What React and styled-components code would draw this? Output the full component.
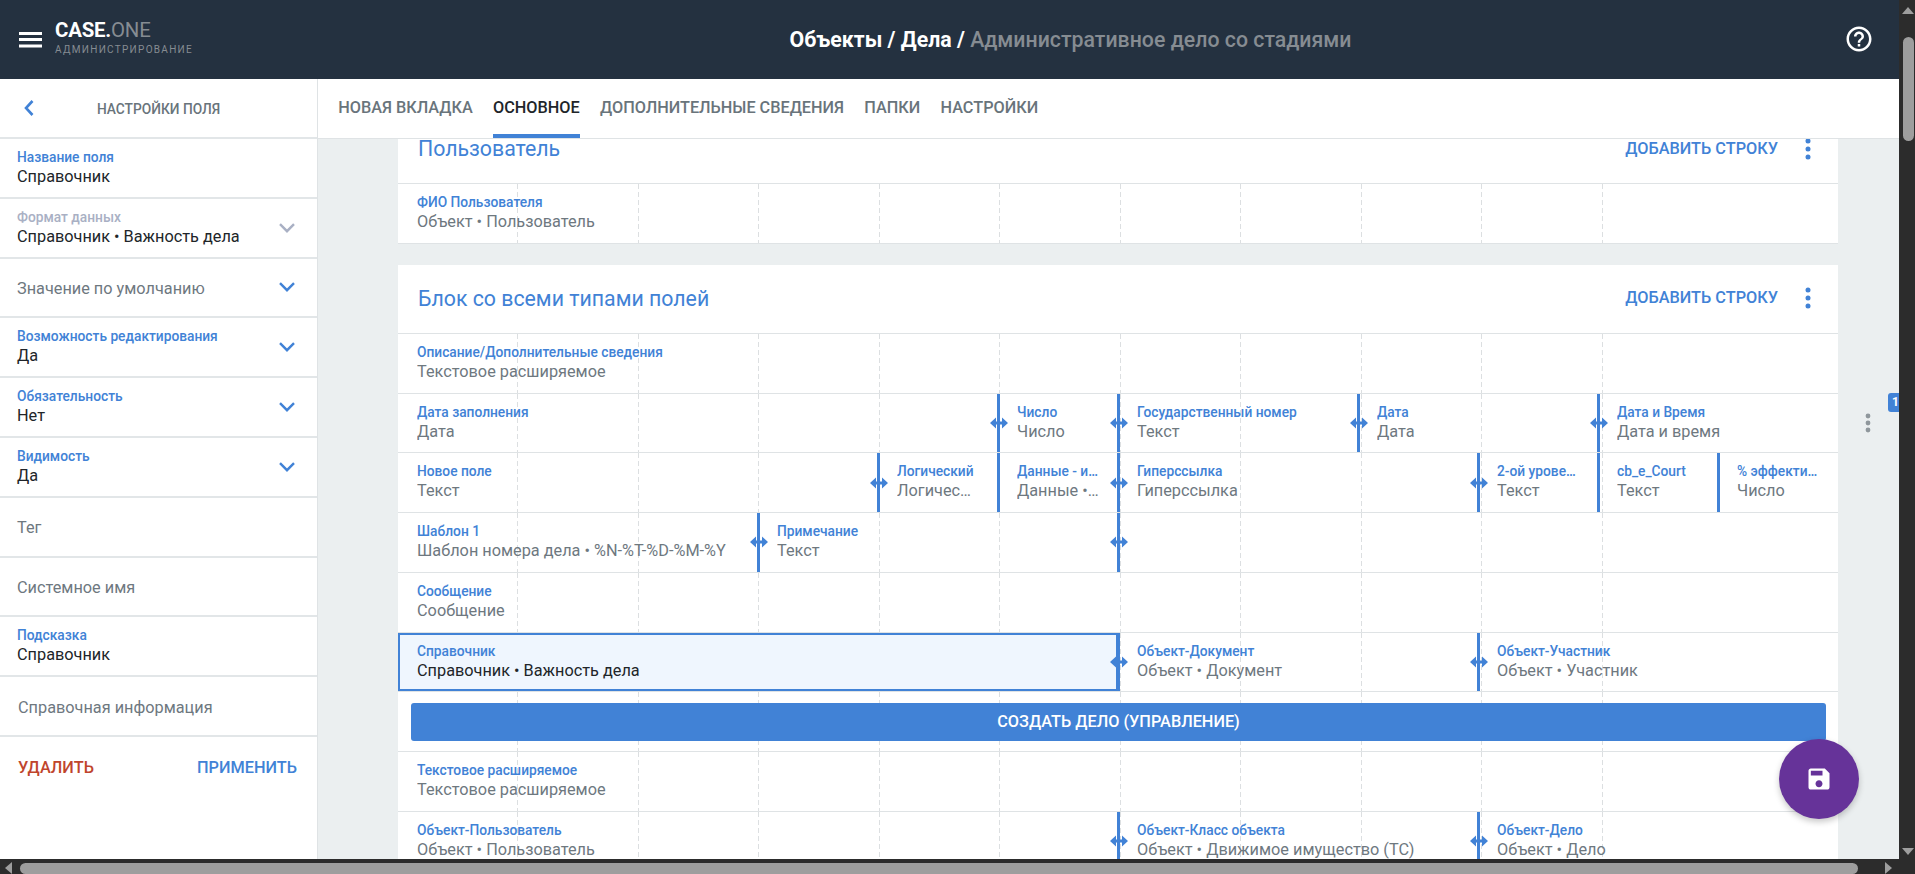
import React from "react";
import styled, { createGlobalStyle } from "styled-components";

const Global = createGlobalStyle`
  html, body { margin: 0; padding: 0; height: 100%; overflow: hidden; }
  body { font-family: Roboto, "Liberation Sans", sans-serif; }
  * { box-sizing: border-box; }
`;

const BLUE = "#4182d6";

const Page = styled.div`
  width: 1915px; height: 874px; overflow: hidden;
  display: grid; grid-template-columns: 1899px 16px; grid-template-rows: 859px 15px;
  background: #2c2c2c;
`;
const Viewport = styled.div`
  position: relative; overflow: hidden; display: flex; flex-direction: column; background: #ebeff0;
`;
const Header = styled.header`
  flex: 0 0 79px; background: #243140; display: flex; align-items: center;
`;
const Brand = styled.div`
  flex: 0 0 245px; display: flex; align-items: center; padding-left: 19px; gap: 13px;
`;
const BrandText = styled.div`
  display: flex; flex-direction: column; margin-top: -4px;
`;
const Logo = styled.div`
  font-size: 20.4px; line-height: 24px; font-weight: 700; color: #fff; letter-spacing: -0.2px;
  span { color: #868c92; font-weight: 400; }
`;
const LogoSub = styled.div`
  font-size: 10px; line-height: 14px; color: #868c92; letter-spacing: 1.3px; margin-top: 1px;
`;
const PageTitle = styled.h1`
  flex: 1; margin: 0; padding-left: 52px; text-align: center; font-size: 21.3px; font-weight: 700; color: #fff;
  span { color: #868c92; font-weight: 500; }
`;
const HelpBtn = styled.div`
  flex: 0 0 30px; height: 30px; margin-right: 25px; color: #fff; margin-top: -2px;
`;
const Body = styled.div`
  flex: 1; min-height: 0; display: flex;
`;
const Sidebar = styled.aside`
  flex: 0 0 318px; background: #fff; border-right: 1px solid #dfe3e5; display: flex; flex-direction: column;
`;
const SideHead = styled.div`
  flex: 0 0 60px; display: flex; align-items: center; position: relative; justify-content: center;
  border-bottom: 2px solid #e2e6e8; font-size: 13.75px; font-weight: 500; color: #69747b; padding-top: 1px;
  svg { position: absolute; left: 18px; top: 18px; }
`;
const SideRow = styled.div`
  flex: 0 0 59.8px; border-bottom: 2px solid #e2e6e8; display: flex; align-items: center; justify-content: space-between;
  padding: 0 22px 0 ${(p) => (p.$inset ? 18 : 17)}px;
`;
const SideText = styled.div`
  display: flex; flex-direction: column; margin-top: -1px;
`;
const SideLabel = styled.div`
  font-size: 13.75px; line-height: 19px; font-weight: 500; color: ${(p) => (p.$muted ? "#a9b0c4" : BLUE)};
`;
const SideValue = styled.div`
  font-size: 16.3px; line-height: 20px; color: #212529;
`;
const SidePlaceholder = styled.div`
  font-size: 16.3px; line-height: 20px; color: #6e787f; padding-top: 3px;
`;
const Actions = styled.div`
  display: flex; justify-content: space-between; padding: 21px 20px 0 18px;
`;
const ActionBtn = styled.button`
  border: 0; background: none; padding: 0; font: 500 16.3px/20px Roboto, sans-serif;
  color: ${(p) => (p.$danger ? "#c0452c" : BLUE)};
`;
const Main = styled.main`
  flex: 1; min-width: 0; display: flex; flex-direction: column;
`;
const Tabs = styled.nav`
  flex: 0 0 60px; background: #fff; border-bottom: 1px solid #dfe3e5; display: flex; padding-left: 10px; position: relative; z-index: 2;
`;
const Tab = styled.div`
  padding: 0 10.2px 2px; height: 59px; display: flex; align-items: center; font-size: 16.25px; font-weight: 500;
  color: ${(p) => (p.$active ? "#212529" : "#69747b")};
  position: relative;
  ${(p) => p.$active && `&::after { content: ""; position: absolute; left: 10.2px; right: 10.2px; bottom: 0; height: 4px; background: ${BLUE}; }`}
`;
const Canvas = styled.div`
  flex: 1; min-height: 0; overflow: hidden; padding: 0 61px 0 80px;
`;
const Stack = styled.div`
  margin-top: -24px; display: flex; flex-direction: column; gap: 21px;
`;
const Card = styled.section`
  width: 1440px; background: #fff; border-bottom: 1px solid #dfe3e5;
`;
const CardHead = styled.div`
  height: 68px; display: flex; align-items: center; padding: 0 27px 1px 20px;
`;
const CardTitle = styled.h2`
  flex: 1; margin: 0; font-size: 21.3px; font-weight: 400; color: ${BLUE};
`;
const AddRow = styled.button`
  border: 0; background: none; padding: 0; margin-right: 27px; font: 500 16.3px/20px Roboto, sans-serif; color: ${BLUE};
`;
const Row = styled.div`
  position: relative; height: 59.75px; border-top: 1.5px solid #dfe3e5;
  display: grid; grid-template-columns: repeat(12, 120px);
  &::before {
    content: ""; position: absolute; inset: 0; pointer-events: none;
    background: repeating-linear-gradient(to right, transparent 0 119.5px, #dcdfe1 119.5px 120.5px, transparent 120.5px 120px);
    -webkit-mask-image: repeating-linear-gradient(to bottom, #000 0 5px, transparent 5px 8px);
    mask-image: repeating-linear-gradient(to bottom, #000 0 5px, transparent 5px 8px);
  }
`;
const Cell = styled.div`
  grid-column: span ${(p) => p.$span};
  position: relative; min-width: 0; padding: 9px 19px 0 19px;
  ${(p) => p.$selected && `background: #eff6fe; outline: 2px solid ${BLUE}; outline-offset: -2px; z-index: 1;`}
`;
const Splitter = styled.div`
  position: absolute; left: -1px; top: 0; bottom: 0; width: 3px; background: ${BLUE}; z-index: 2;
  svg { position: absolute; left: -7.5px; top: 50%; margin-top: -6px; }
`;
const FieldLabel = styled.div`
  font-size: 13.75px; line-height: 19px; font-weight: 500; color: ${BLUE};
  white-space: nowrap; overflow: hidden; text-overflow: ellipsis;
`;
const FieldValue = styled.div`
  font-size: 16.3px; line-height: 20px; color: ${(p) => (p.$selected ? "#212529" : "#6e787f")};
  white-space: nowrap; overflow: hidden; text-overflow: ellipsis;
`;
const BtnCell = styled.div`
  grid-column: span 12; padding: 11px 12px 0 13px; position: relative;
`;
const Primary = styled.button`
  width: 100%; height: 38px; border: 0; border-radius: 3px; background: ${BLUE}; color: #fff;
  font: 500 16.3px/20px Roboto, sans-serif; display: block;
`;
const Fab = styled.button`
  position: absolute; left: 1779px; top: 739px; width: 80px; height: 80px; border: 0; border-radius: 50%;
  background: #663399; color: #fff; display: flex; align-items: center; justify-content: center;
  box-shadow: 0 3px 6px rgba(0,0,0,.22); z-index: 5;
`;
const SideTab = styled.div`
  position: absolute; left: 1888px; top: 393px; width: 24px; height: 19px; border-radius: 3px; background: ${BLUE};
  color: #fff; font-size: 12px; font-weight: 700; line-height: 19px; padding-left: 4px;
`;
const SideDots = styled.div`
  position: absolute; left: 1865px; top: 413px; width: 6px; height: 20px; color: #8f979c;
  svg { display: block; }
`;
const VBar = styled.div`
  grid-row: 1 / span 2; grid-column: 2; display: flex; flex-direction: column; align-items: flex-start; padding: 7px 0 19px 3px; overflow: hidden;
`;
const VThumb = styled.div`
  width: 11px; height: 104px; margin: 23px 0 0 1px; border-radius: 6px; background: #9e9e9e;
`;
const TriUp = styled.div`
  width: 0; height: 0; border-left: 6.5px solid transparent; border-right: 6.5px solid transparent; border-bottom: 7px solid #9e9e9e;
`;
const TriDown = styled(TriUp)`
  border-bottom: 0; border-top: 7px solid #9e9e9e; margin-top: auto;
`;
const HBar = styled.div`
  grid-column: 1; grid-row: 2; display: flex; align-items: flex-end; padding-left: 5px; overflow: visible; position: relative;
`;
const HThumb = styled.div`
  flex: 0 0 1838px; height: 11px; margin-left: 8px; border-radius: 6px; background: #9e9e9e;
`;
const TriLeft = styled.div`
  flex: none; width: 0; height: 0; border-top: 6px solid transparent; border-bottom: 6px solid transparent; border-right: 7px solid #9e9e9e;
`;
const TriRight = styled.div`
  flex: none; width: 0; height: 0; margin-left: 27px; border-top: 6px solid transparent; border-bottom: 6px solid transparent; border-left: 7px solid #9e9e9e;
`;

const Burger = () => (
  <svg width="23" height="16" viewBox="0 0 23 16" fill="#fff"><rect y="0" width="23" height="3" /><rect y="6" width="23" height="3" /><rect y="12.5" width="23" height="3" /></svg>
);
const Help = () => (
  <svg width="30" height="30" viewBox="0 0 24 24" fill="currentColor"><path d="M11 18h2v-2h-2v2zm1-16C6.48 2 2 6.48 2 12s4.48 10 10 10 10-4.48 10-10S17.52 2 12 2zm0 18c-4.41 0-8-3.59-8-8s3.59-8 8-8 8 3.59 8 8-3.59 8-8 8zm0-14c-2.21 0-4 1.79-4 4h2c0-1.1.9-2 2-2s2 .9 2 2c0 2-3 1.75-3 5h2c0-2.25 3-2.5 3-5 0-2.21-1.79-4-4-4z" /></svg>
);
const Back = () => (
  <svg width="22" height="22" viewBox="0 0 22 22" fill="none" stroke={BLUE} strokeWidth="2.6"><path d="M14.5 4 L8 11 L14.5 18" /></svg>
);
const Chevron = ({ muted }) => (
  <svg width="16" height="10" viewBox="0 0 16 10" fill="none" stroke={muted ? "#a9b0c4" : BLUE} strokeWidth="2.4"><path d="M1 1.2 L8 8.2 L15 1.2" /></svg>
);
const Dots = () => (
  <svg width="6" height="22" viewBox="0 0 6 22" fill={BLUE}><circle cx="3" cy="3" r="2.5" /><circle cx="3" cy="11" r="2.5" /><circle cx="3" cy="19" r="2.5" /></svg>
);
const Arrows = () => (
  <svg width="18" height="12" viewBox="0 0 18 12" fill={BLUE}><path d="M0 6 L6 .6 V4.6 H12 V.6 L18 6 L12 11.4 V7.4 H6 V11.4 Z" /></svg>
);
const Save = () => (
  <svg width="28" height="28" viewBox="0 0 24 24" fill="currentColor"><path d="M17 3H5c-1.11 0-2 .9-2 2v14c0 1.1.89 2 2 2h14c1.1 0 2-.9 2-2V7l-4-4zm-5 16c-1.66 0-3-1.34-3-3s1.34-3 3-3 3 1.34 3 3-1.34 3-3 3zm3-10H5V5h10v4z" /></svg>
);

const sideFields = [
  { label: "Название поля", value: "Справочник" },
  { label: "Формат данных", value: "Справочник • Важность дела", chevron: true, muted: true },
  { placeholder: "Значение по умолчанию", chevron: true },
  { label: "Возможность редактирования", value: "Да", chevron: true },
  { label: "Обязательность", value: "Нет", chevron: true },
  { label: "Видимость", value: "Да", chevron: true },
  { placeholder: "Тег" },
  { placeholder: "Системное имя" },
  { label: "Подсказка", value: "Справочник" },
  { placeholder: "Справочная информация", inset: true },
];

const tabs = ["Новая вкладка", "Основное", "Дополнительные сведения", "Папки", "Настройки"];

const F = (span, label, value, split, handle = split, selected = false) => ({ span, label, value, split, handle, selected });

const rows = [
  [F(12, "Описание/Дополнительные сведения", "Текстовое расширяемое")],
  [F(5, "Дата заполнения", "Дата"), F(1, "Число", "Число", true), F(2, "Государственный номер", "Текст", true), F(2, "Дата", "Дата", true), F(2, "Дата и Время", "Дата и время", true)],
  [F(4, "Новое поле", "Текст"), F(1, "Логический", "Логический", true), F(1, "Данные - источник", "Данные • Источник", true, false), F(3, "Гиперссылка", "Гиперссылка", true), F(1, "2-ой уровень", "Текст", true), F(1, "cb_e_Court", "Текст", true, false), F(1, "% эффективности", "Число", true, false)],
  [F(3, "Шаблон 1", "Шаблон номера дела • %N-%T-%D-%M-%Y"), F(3, "Примечание", "Текст", true), F(6, "", "", true)],
  [F(12, "Сообщение", "Сообщение")],
  [F(6, "Справочник", "Справочник • Важность дела", false, false, true), F(3, "Объект-Документ", "Объект • Документ", true), F(3, "Объект-Участник", "Объект • Участник", true)],
  "button",
  [F(12, "Текстовое расширяемое", "Текстовое расширяемое")],
  [F(6, "Объект-Пользователь", "Объект • Пользователь"), F(3, "Объект-Класс объекта", "Объект • Движимое имущество (ТС)", true), F(3, "Объект-Дело", "Объект • Дело", true)],
];

const FieldCell = ({ f }) => (
  <Cell $span={f.span} $selected={f.selected}>
    {f.split && <Splitter>{f.handle && <Arrows />}</Splitter>}
    {f.label && <FieldLabel>{f.label}</FieldLabel>}
    {f.value && <FieldValue $selected={f.selected}>{f.value}</FieldValue>}
  </Cell>
);

const CardHeader = ({ title }) => (
  <CardHead>
    <CardTitle>{title}</CardTitle>
    <AddRow>ДОБАВИТЬ СТРОКУ</AddRow>
    <Dots />
  </CardHead>
);

export default function App() {
  return (
    <>
      <Global />
      <Page>
        <Viewport>
          <Header>
            <Brand>
              <Burger />
              <BrandText>
                <Logo>CASE.<span>ONE</span></Logo>
                <LogoSub>АДМИНИСТРИРОВАНИЕ</LogoSub>
              </BrandText>
            </Brand>
            <PageTitle>Объекты / Дела / <span>Административное дело со стадиями</span></PageTitle>
            <HelpBtn><Help /></HelpBtn>
          </Header>
          <Body>
            <Sidebar>
              <SideHead><Back />НАСТРОЙКИ ПОЛЯ</SideHead>
              {sideFields.map((s, i) => (
                <SideRow key={i} $inset={s.inset}>
                  {s.placeholder ? (
                    <SidePlaceholder>{s.placeholder}</SidePlaceholder>
                  ) : (
                    <SideText>
                      <SideLabel $muted={s.muted}>{s.label}</SideLabel>
                      <SideValue>{s.value}</SideValue>
                    </SideText>
                  )}
                  {s.chevron && <Chevron muted={s.muted} />}
                </SideRow>
              ))}
              <Actions>
                <ActionBtn $danger>УДАЛИТЬ</ActionBtn>
                <ActionBtn>ПРИМЕНИТЬ</ActionBtn>
              </Actions>
            </Sidebar>
            <Main>
              <Tabs>
                {tabs.map((t, i) => <Tab key={t} $active={i === 1}>{t.toUpperCase()}</Tab>)}
              </Tabs>
              <Canvas>
                <Stack>
                  <Card>
                    <CardHeader title="Пользователь" />
                    <Row><FieldCell f={F(12, "ФИО Пользователя", "Объект • Пользователь")} /></Row>
                  </Card>
                  <Card>
                    <CardHeader title="Блок со всеми типами полей" />
                    {rows.map((r, i) => (
                      <Row key={i}>
                        {r === "button" ? (
                          <BtnCell><Primary>СОЗДАТЬ ДЕЛО (УПРАВЛЕНИЕ)</Primary></BtnCell>
                        ) : (
                          r.map((f, j) => <FieldCell key={j} f={f} />)
                        )}
                      </Row>
                    ))}
                  </Card>
                </Stack>
              </Canvas>
            </Main>
          </Body>
          <SideTab>1</SideTab>
          <SideDots>
            <svg width="6" height="20" viewBox="0 0 6 20" fill="currentColor"><circle cx="3" cy="3" r="2.4" /><circle cx="3" cy="10" r="2.4" /><circle cx="3" cy="17" r="2.4" /></svg>
          </SideDots>
          <Fab><Save /></Fab>
        </Viewport>
        <VBar><TriUp /><VThumb /><TriDown /></VBar>
        <HBar><TriLeft /><HThumb /><TriRight /></HBar>
      </Page>
    </>
  );
}
